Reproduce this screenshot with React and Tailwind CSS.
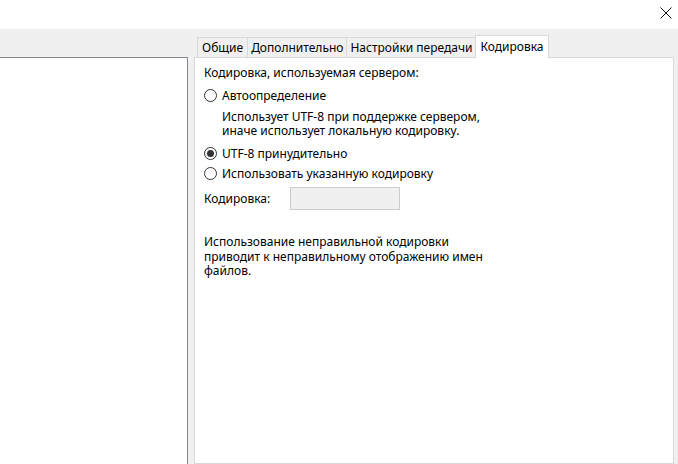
import React from "react";

const Radio = ({ checked, label }) => (
  <label className="flex items-center h-[20px] gap-[5px]">
    <span className="w-[13px] h-[13px] rounded-full border border-[#333333] bg-white flex items-center justify-center">
      {checked && <span className="w-[7px] h-[7px] rounded-full bg-[#333333]" />}
    </span>
    <span>{label}</span>
  </label>
);

const Tab = ({ label, active }) =>
  active ? (
    <div className="h-[23px] -mb-px px-[4px] pt-[2px] bg-white border border-b-0 border-[#d9d9d9] -ml-px relative z-10">
      {label}
    </div>
  ) : (
    <div className="h-[20px] px-[3px] first:px-[4px] pt-[1px] bg-[#f0f0f0] border border-b-0 border-[#d9d9d9] -ml-px first:ml-0">
      {label}
    </div>
  );

export default function App() {
  return (
    <div
      className="w-[678px] h-[464px] overflow-hidden bg-[#f0f0f0] text-[12px] text-black flex flex-col"
      style={{ fontFamily: '"Noto Sans", "Liberation Sans", sans-serif' }}
    >
      {/* title bar */}
      <div className="h-[29px] bg-white flex justify-end items-start shrink-0">
        <svg width="12" height="12" viewBox="0 0 12 12" className="mt-[7px] mr-[6px]">
          <path d="M0.5 0.5 L11.5 11.5 M11.5 0.5 L0.5 11.5" stroke="#111" strokeWidth="1" />
        </svg>
      </div>

      <div className="flex flex-1 min-h-0">
        {/* left list */}
        <div className="w-[188px] mt-[28px] bg-white border-t border-r border-[#828790] shrink-0" />

        {/* tabs */}
        <div className="flex flex-col ml-[6px] w-[480px] mt-[6px]">
          <div className="flex items-end pl-[3px] leading-[17px]">
            <Tab label="Общие" />
            <Tab label="Дополнительно" />
            <Tab label="Настройки передачи" />
            <Tab label="Кодировка" active />
          </div>
          <div className="flex-1 bg-white border border-[#d9d9d9] pl-[9px] pt-[7px] leading-[15px]">
            <div className="h-[18px]">Кодировка, используемая сервером:</div>
            <div className="mt-[2px]">
              <Radio label="Автоопределение" />
            </div>
            <div className="pl-[18px] mt-[5px] leading-[14px]">
              <div>Использует UTF-8 при поддержке сервером,</div>
              <div>иначе использует локальную кодировку.</div>
            </div>
            <div className="mt-[5px]">
              <Radio checked label="UTF-8 принудительно" />
            </div>
            <Radio label="Использовать указанную кодировку" />
            <div className="flex items-center mt-[4px]">
              <span className="w-[86px]">Кодировка:</span>
              <div className="w-[110px] h-[23px] bg-[#f0f0f0] border border-[#cccccc]" />
            </div>
            <div className="mt-[25px] leading-[14.5px]">
              <div>Использование неправильной кодировки</div>
              <div>приводит к неправильному отображению имен</div>
              <div>файлов.</div>
            </div>
          </div>
        </div>
      </div>
    </div>
  );
}
